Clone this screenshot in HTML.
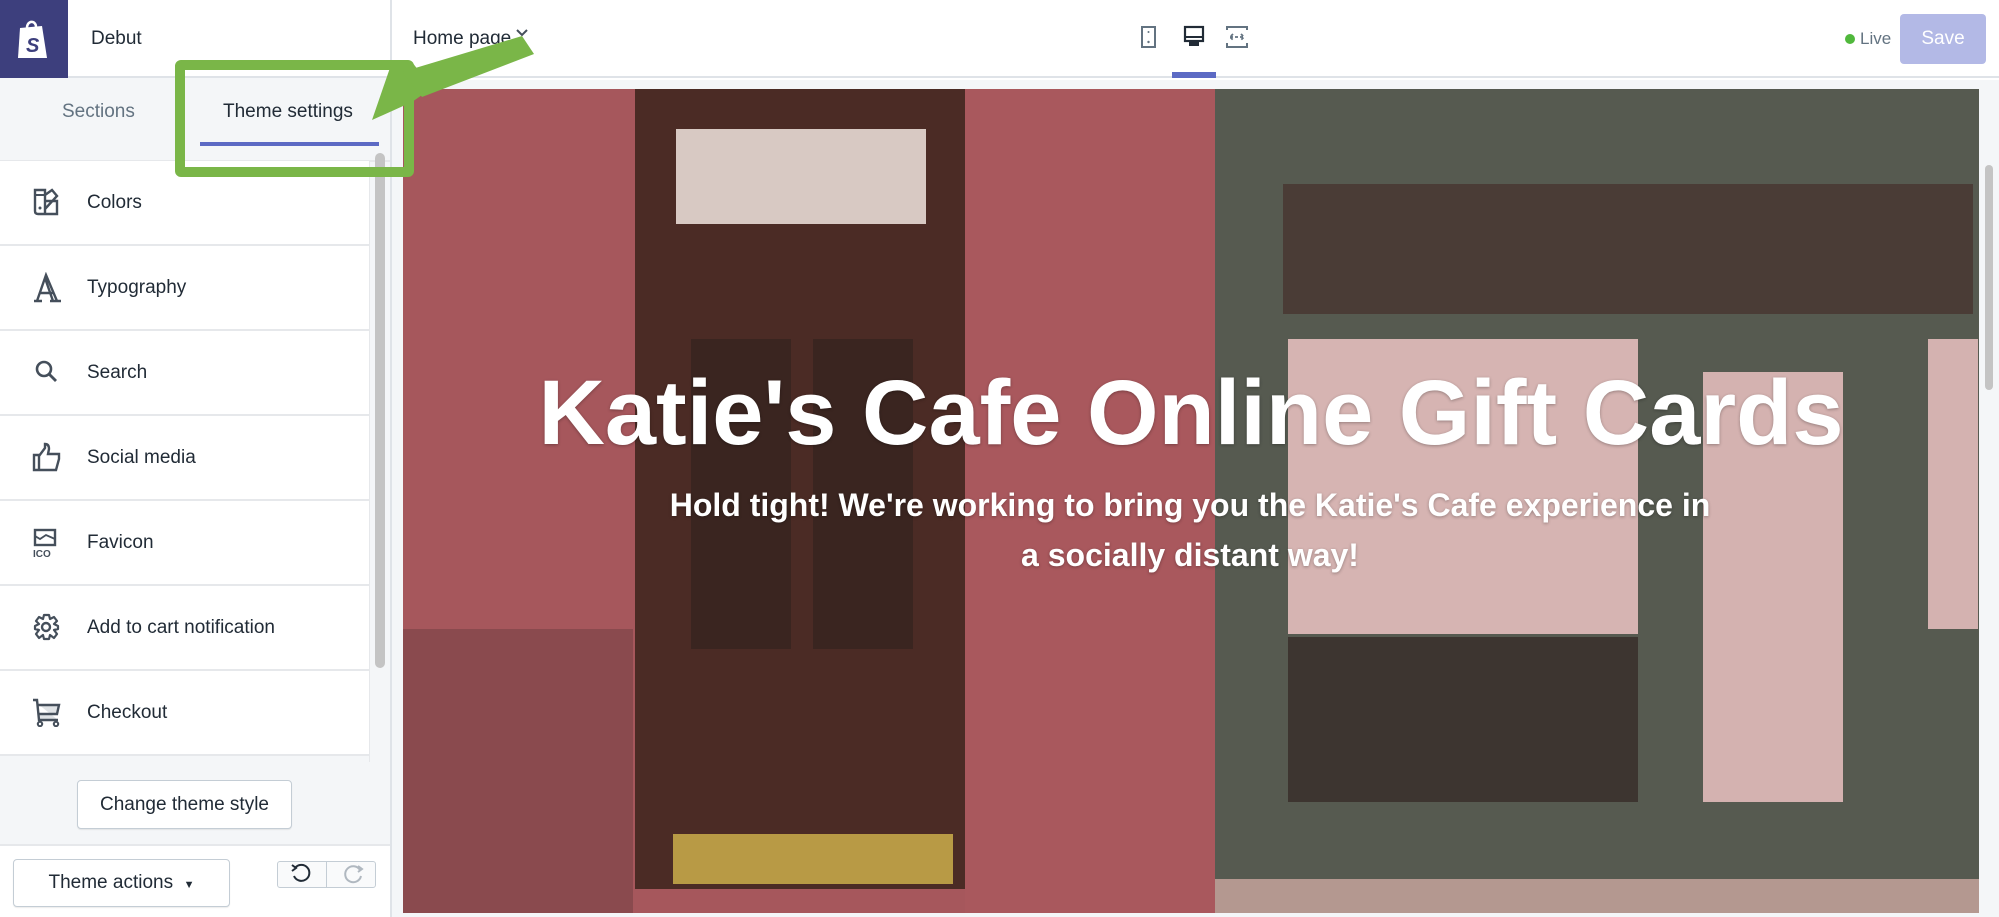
<!DOCTYPE html>
<html><head><meta charset="utf-8"><style>
*{box-sizing:border-box;margin:0;padding:0}
body{width:1999px;height:917px;overflow:hidden;background:#fff;font-family:"Liberation Sans",Arial,sans-serif;color:#212b36;position:relative}
.abs{position:absolute}
.item{position:absolute;left:0;width:369px;height:85px;border-bottom:2px solid #e6e8eb;background:#fff}
.item span{position:absolute;left:87px;top:31px;font-size:19px;color:#212b36}
.item svg{position:absolute;left:32px;top:26px}
.btn{position:absolute;background:#fff;border:1px solid #c4cdd5;border-radius:4px;box-shadow:0 1px 1px rgba(0,0,0,.08);font-size:19px;text-align:center}
</style></head><body>
<div class="abs" style="left:0;top:0;width:1999px;height:78px;background:#fff;border-bottom:2px solid #dfe3e8"></div>
<div class="abs" style="left:0;top:0;width:68px;height:78px;background:#3d3f7d"></div>
<svg class="abs" style="left:16px;top:18px" width="34" height="42" viewBox="0 0 34 42"><path d="M4 10 L26 8 L31 40 L2 40 Z" fill="#fff"/><path d="M11 10 C11 2 20 2 20 9" stroke="#fff" stroke-width="2.5" fill="none"/><text x="10" y="34" font-size="20" font-weight="bold" font-style="italic" fill="#3d3f7d" font-family="Liberation Sans">S</text></svg>
<div class="abs" style="left:91px;top:28px;font-size:19px">Debut</div>
<div class="abs" style="left:390px;top:0;width:2px;height:917px;background:#dfe3e8"></div>
<div class="abs" style="left:413px;top:28px;font-size:19px">Home page</div>
<svg class="abs" style="left:515px;top:28px" width="14" height="10"><path d="M2 2 L7 7 L12 2" stroke="#454f5b" stroke-width="2" fill="none"/></svg>
<svg class="abs" style="left:1140px;top:24px" width="120" height="28" viewBox="0 0 120 28"><rect x="2" y="3" width="13" height="20" fill="none" stroke="#637381" stroke-width="2"/><circle cx="8.5" cy="18" r="1.2" fill="#637381"/><circle cx="8.5" cy="8" r="1" fill="#637381"/>
<rect x="45" y="3" width="18" height="14" fill="none" stroke="#212b36" stroke-width="2.2"/><rect x="49" y="17" width="10" height="5" fill="#212b36"/><line x1="46" y1="13" x2="62" y2="13" stroke="#212b36" stroke-width="2"/>
<path d="M87 6 V3 H107 V6 M87 19 V23 H107 V19" fill="none" stroke="#637381" stroke-width="2"/><path d="M93 10 L90 13 L93 16 M101 10 L104 13 L101 16 M90 13 H104" fill="none" stroke="#637381" stroke-width="1.8" stroke-dasharray="3 2"/></svg>
<div class="abs" style="left:1172px;top:72px;width:44px;height:6px;background:#5c6ac4"></div>
<div class="abs" style="left:1845px;top:34px;width:10px;height:10px;border-radius:50%;background:#50b83c"></div>
<div class="abs" style="left:1860px;top:29px;font-size:17px;color:#637381">Live</div>
<div class="abs" style="left:1900px;top:14px;width:86px;height:50px;border-radius:4px;background:#b3b9e6;color:#fff;font-size:19px;text-align:center;line-height:50px">Save</div>
<div class="abs" style="left:0;top:78px;width:390px;height:84px;background:#f4f6f8;border-bottom:2px solid #e6e8eb"></div>
<div class="abs" style="left:62px;top:101px;font-size:19px;color:#637381">Sections</div>
<div class="abs" style="left:223px;top:101px;font-size:19px;color:#212b36">Theme settings</div>
<div class="abs" style="left:200px;top:142px;width:179px;height:4px;background:#5c6ac4"></div>
<div class="abs" style="left:0;top:162px;width:390px;height:682px;background:#f4f6f8"></div>
<div class="abs" style="left:369px;top:162px;width:17px;height:600px;background:#f4f6f8;border-left:1px solid #e6e8eb"></div>
<div class="abs" style="left:375px;top:153px;width:10px;height:515px;border-radius:5px;background:#c4c4c4"></div>
<div class="item" style="top:161px"><svg width="30" height="30" viewBox="0 0 30 30"><path d="M3 3 H13 V27 H6 Q3 27 3 24 Z M13 8 L20 3 L25 9 L13 22 M13 14 L25 14 V27 H13" fill="none" stroke="#454f5b" stroke-width="2.4"/><circle cx="8" cy="21" r="1.5" fill="#454f5b"/><line x1="3" y1="8" x2="13" y2="8" stroke="#454f5b" stroke-width="2"/></svg><span>Colors</span></div>
<div class="item" style="top:246px"><svg width="30" height="32" viewBox="0 0 30 32"><path d="M2 29 H10 M18 29 H29 M5 29 L14 3 L25 29 M8 21 H21 M13 6 L21 29" fill="none" stroke="#454f5b" stroke-width="2.4"/></svg><span>Typography</span></div>
<div class="item" style="top:331px"><svg width="30" height="30" viewBox="0 0 30 30"><circle cx="12" cy="12" r="7" fill="none" stroke="#454f5b" stroke-width="2.6"/><line x1="17" y1="17" x2="24" y2="24" stroke="#454f5b" stroke-width="2.8"/></svg><span>Search</span></div>
<div class="item" style="top:416px"><svg width="30" height="30" viewBox="0 0 30 30"><path d="M2 13 H7 V28 H2 Z M7 14 L13 6 V2 Q17 2 17 7 L16 12 H27 V17 L24 28 H7" fill="none" stroke="#454f5b" stroke-width="2.4"/></svg><span>Social media</span></div>
<div class="item" style="top:501px"><svg width="30" height="32" viewBox="0 0 30 32"><rect x="3" y="3" width="20" height="15" fill="none" stroke="#454f5b" stroke-width="2.4"/><path d="M3 9 L8 12 L14 8 L23 12" fill="none" stroke="#454f5b" stroke-width="1.8"/><text x="1" y="30" font-size="10" font-weight="bold" fill="#454f5b" font-family="Liberation Sans">ICO</text></svg><span>Favicon</span></div>
<div class="item" style="top:586px"><svg width="30" height="30" viewBox="0 0 30 30"><circle cx="14" cy="15" r="4" fill="none" stroke="#454f5b" stroke-width="2.4"/><path d="M12 3 H17 L18 7 L22 5 L25 9 L22 12 L26 14 V17 L22 18 L25 22 L22 26 L18 23 L17 27 H12 L11 23 L7 26 L4 22 L7 18 L3 17 V14 L7 12 L4 9 L7 5 L11 7 Z" fill="none" stroke="#454f5b" stroke-width="2.2" stroke-linejoin="round"/></svg><span>Add to cart notification</span></div>
<div class="item" style="top:671px"><svg width="30" height="30" viewBox="0 0 30 30"><path d="M1 3 H5 L7 23 H26 M6 8 H27 L25 17 H7" fill="#e0e3e6" stroke="#454f5b" stroke-width="2.4"/><circle cx="8" cy="27" r="2.2" fill="none" stroke="#454f5b" stroke-width="2"/><circle cx="24" cy="27" r="2.2" fill="none" stroke="#454f5b" stroke-width="2"/></svg><span>Checkout</span></div>
<div class="btn" style="left:77px;top:780px;width:215px;height:49px;line-height:47px">Change theme style</div>
<div class="abs" style="left:0;top:844px;width:390px;height:73px;background:#fff;border-top:2px solid #e6e8eb"></div>
<div class="btn" style="left:13px;top:859px;width:217px;height:48px;line-height:46px">Theme actions &nbsp;<span style="font-size:11px">&#9660;</span></div>
<div class="abs" style="left:277px;top:861px;width:99px;height:27px;border:1px solid #c4cdd5;border-radius:3px;background:#f9fafb"></div>
<div class="abs" style="left:326px;top:862px;width:1px;height:25px;background:#c4cdd5"></div>
<svg class="abs" style="left:290px;top:862px" width="80" height="26" viewBox="0 0 80 26"><path d="M5 6 A8 8 0 1 1 4 14" fill="none" stroke="#212b36" stroke-width="2"/><path d="M2 3 L6 6 L2 9" fill="none" stroke="#212b36" stroke-width="2"/><path d="M70 8 A8 8 0 1 0 71 14" fill="none" stroke="#b0b8c0" stroke-width="2"/><path d="M68 4 L72 7 L68 10" fill="none" stroke="#b0b8c0" stroke-width="2"/></svg>
<div class="abs" style="left:392px;top:80px;width:1607px;height:837px;background:#f4f6f8"></div>
<div class="abs" style="left:403px;top:89px;width:1576px;height:824px;background:#a6575c;overflow:hidden">
 <div class="abs" style="left:232px;top:0;width:330px;height:800px;background:#4b2b25"></div>
 <div class="abs" style="left:273px;top:40px;width:250px;height:95px;background:#d8c9c3"></div>
 <div class="abs" style="left:288px;top:250px;width:100px;height:310px;background:#3a2520"></div>
 <div class="abs" style="left:410px;top:250px;width:100px;height:310px;background:#3a2520"></div>
 <div class="abs" style="left:270px;top:745px;width:280px;height:50px;background:#b89a45"></div>
 <div class="abs" style="left:562px;top:0;width:250px;height:824px;background:#a9585d"></div>
 <div class="abs" style="left:812px;top:0;width:764px;height:824px;background:#565a50"></div>
 <div class="abs" style="left:880px;top:95px;width:690px;height:130px;background:#4a3c36"></div>
 <div class="abs" style="left:885px;top:250px;width:350px;height:295px;background:#d6b4b2"></div>
 <div class="abs" style="left:1300px;top:283px;width:140px;height:430px;background:#d4b2b0"></div>
 <div class="abs" style="left:1525px;top:250px;width:50px;height:290px;background:#d4b2b0"></div>
 <div class="abs" style="left:885px;top:548px;width:350px;height:165px;background:#3d3530"></div>
 <div class="abs" style="left:812px;top:790px;width:764px;height:34px;background:#b49890"></div>
 <div class="abs" style="left:0;top:540px;width:230px;height:284px;background:#8a4a4e"></div>
</div>
<div class="abs" style="left:403px;top:358px;width:1576px;text-align:center;color:#fff;font-weight:bold;font-size:92px;line-height:110px;text-shadow:0 1px 3px rgba(0,0,0,.3)">Katie's Cafe Online Gift Cards</div>
<div class="abs" style="left:660px;top:480px;width:1060px;text-align:center;color:#fff;font-weight:bold;font-size:32px;line-height:50px;text-shadow:0 1px 3px rgba(0,0,0,.3)">Hold tight! We're working to bring you the Katie's Cafe experience in a socially distant way!</div>
<div class="abs" style="left:1985px;top:165px;width:8px;height:225px;border-radius:4px;background:#c4c4c4"></div>
<div class="abs" style="left:175px;top:60px;width:239px;height:117px;border:10px solid #7ab648;border-radius:6px"></div>
<svg class="abs" style="left:0;top:0" width="600" height="200"><polygon points="372,120 392,62 412,62 432,88 412,102" fill="#7ab648"/><polygon points="402,72 522,36 534,54 422,97" fill="#7ab648"/></svg>
</body></html>
